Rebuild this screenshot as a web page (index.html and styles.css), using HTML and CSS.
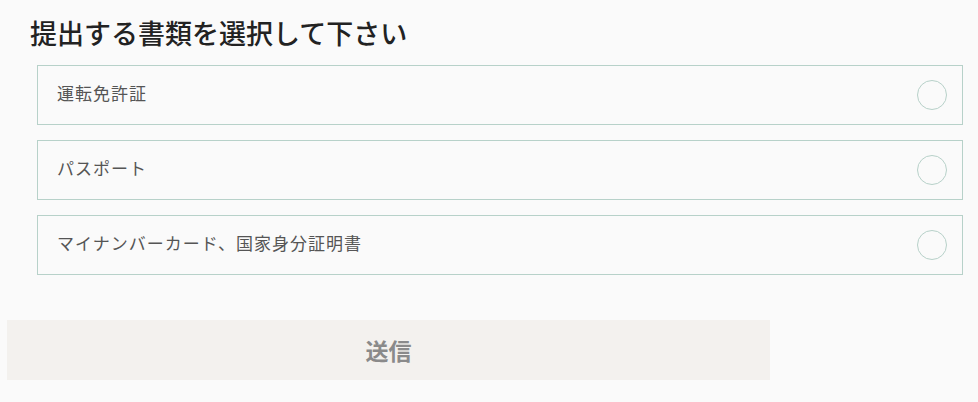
FILE: index.html
```html
<!DOCTYPE html>
<html lang="ja">
<head>
<meta charset="utf-8">
<title>書類選択</title>
<link rel="stylesheet" href="styles.css">
</head>
<body>
<main class="page">
  <h1 class="title">提出する書類を選択して下さい</h1>
  <ul class="options">
    <li class="option"><span class="option-label">運転免許証</span><span class="radio"></span></li>
    <li class="option"><span class="option-label">パスポート</span><span class="radio"></span></li>
    <li class="option"><span class="option-label">マイナンバーカード、国家身分証明書</span><span class="radio"></span></li>
  </ul>
  <button class="submit" type="button">送信</button>
</main>
</body>
</html>
```

FILE: styles.css
```css
* { box-sizing: border-box; }
html, body {
  margin: 0;
  padding: 0;
  background: #fafafa;
  font-family: "Noto Sans CJK JP", "Noto Sans", sans-serif;
}
.page {
  display: flex;
  flex-direction: column;
  align-items: flex-start;
  padding-top: 12px;
}
.title {
  margin: 0 0 11px 30px;
  font-size: 27px;
  line-height: 42px;
  font-weight: 500;
  color: #222;
}
.options {
  list-style: none;
  margin: 0 0 0 37px;
  padding: 0;
  width: 926px;
  display: flex;
  flex-direction: column;
  gap: 15px;
}
.option {
  height: 60px;
  border: 1px solid #b7d1c9;
  display: flex;
  align-items: center;
  justify-content: space-between;
  padding: 0 15px 0 19px;
  background: #fafafa;
}
.option-label {
  font-size: 17px;
  line-height: 24px;
  letter-spacing: 1px;
  color: #555;
  margin-bottom: 4px;
}
.radio {
  width: 30px;
  height: 30px;
  border: 1px solid #b7d1c9;
  border-radius: 50%;
}
.submit {
  margin: 45px 0 0 7px;
  width: 763px;
  height: 60px;
  border: none;
  background: #f3f1ee;
  color: #8a8a8a;
  font-family: "Noto Sans CJK JP", sans-serif;
  font-size: 23px;
  font-weight: 700;
}
```
